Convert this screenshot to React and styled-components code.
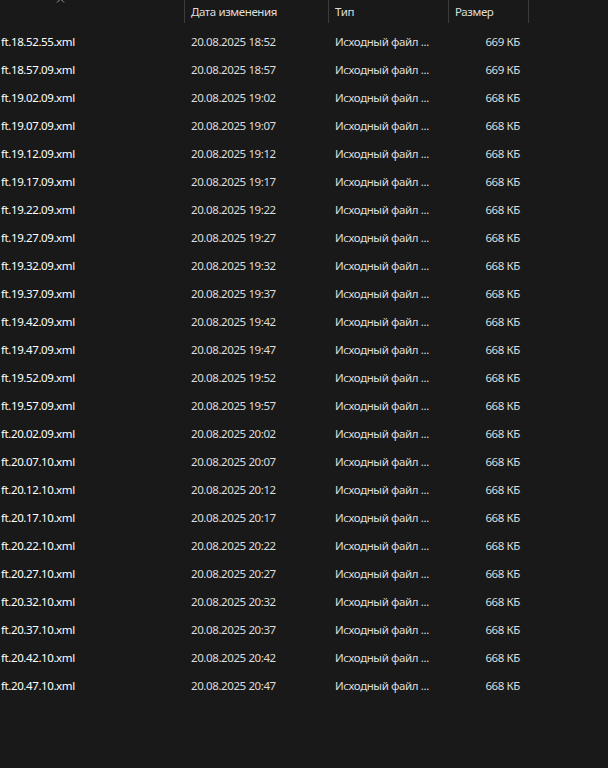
import React from 'react';
import styled, { createGlobalStyle } from 'styled-components';

const GlobalStyle = createGlobalStyle`
    html, body {
        margin: 0;
        padding: 0;
        background: #191919;
    }
    body {
        font-family: "Noto Sans", "Open Sans", sans-serif;
        font-size: 11.5px;
        letter-spacing: -0.4px;
    }
`;

const COLS = '184px 144px 120px 80px 80px';

const Page = styled.div`
    width: 608px;
    height: 768px;
    background: #191919;
    overflow: hidden;
    color: #ffffff;
`;

const HeaderRow = styled.div`
    position: relative;
    display: grid;
    grid-template-columns: ${COLS};
    height: 23px;
`;

const HeaderCell = styled.div`
    display: flex;
    align-items: center;
    padding-left: 6px;
    border-left: ${(p) => (p.divider ? '1px solid #3b3b3b' : 'none')};
    color: #dedede;
    white-space: nowrap;
`;

const SortArrow = styled.svg`
    position: absolute;
    left: 56px;
    top: -3px;
`;

const List = styled.div`
    padding-top: 4px;
`;

const Row = styled.div`
    display: grid;
    grid-template-columns: ${COLS};
    height: 28px;
    align-items: center;
    white-space: nowrap;
`;

const Cell = styled.div`
    overflow: hidden;
    padding-left: ${(p) => p.pad || '0px'};
    padding-right: ${(p) => p.padRight || '0px'};
    text-align: ${(p) => (p.right ? 'right' : 'left')};
    color: ${(p) => p.color || '#dedede'};
`;

const rows = [
    ['18.52.55', '18:52', '669'],
    ['18.57.09', '18:57', '669'],
    ['19.02.09', '19:02', '668'],
    ['19.07.09', '19:07', '668'],
    ['19.12.09', '19:12', '668'],
    ['19.17.09', '19:17', '668'],
    ['19.22.09', '19:22', '668'],
    ['19.27.09', '19:27', '668'],
    ['19.32.09', '19:32', '668'],
    ['19.37.09', '19:37', '668'],
    ['19.42.09', '19:42', '668'],
    ['19.47.09', '19:47', '668'],
    ['19.52.09', '19:52', '668'],
    ['19.57.09', '19:57', '668'],
    ['20.02.09', '20:02', '668'],
    ['20.07.10', '20:07', '668'],
    ['20.12.10', '20:12', '668'],
    ['20.17.10', '20:17', '668'],
    ['20.22.10', '20:22', '668'],
    ['20.27.10', '20:27', '668'],
    ['20.32.10', '20:32', '668'],
    ['20.37.10', '20:37', '668'],
    ['20.42.10', '20:42', '668'],
    ['20.47.10', '20:47', '668'],
];

const App = () => (
    <Page>
        <GlobalStyle />
        <HeaderRow>
            <HeaderCell />
            <HeaderCell divider>Дата изменения</HeaderCell>
            <HeaderCell divider>Тип</HeaderCell>
            <HeaderCell divider>Размер</HeaderCell>
            <HeaderCell divider />
            <SortArrow width="9" height="7" viewBox="0 0 9 7">
                <path d="M1 5.5 L4.5 2 L8 5.5" fill="none" stroke="#9a9a9a" strokeWidth="1" />
            </SortArrow>
        </HeaderRow>
        <List>
            {rows.map(([name, time, size]) => (
                <Row key={name}>
                    <Cell pad="1px" color="#ffffff">ft.{name}.xml</Cell>
                    <Cell pad="7px">20.08.2025 {time}</Cell>
                    <Cell pad="7px">Исходный файл ...</Cell>
                    <Cell right padRight="8px">{size} КБ</Cell>
                    <Cell />
                </Row>
            ))}
        </List>
    </Page>
);

export default App;
